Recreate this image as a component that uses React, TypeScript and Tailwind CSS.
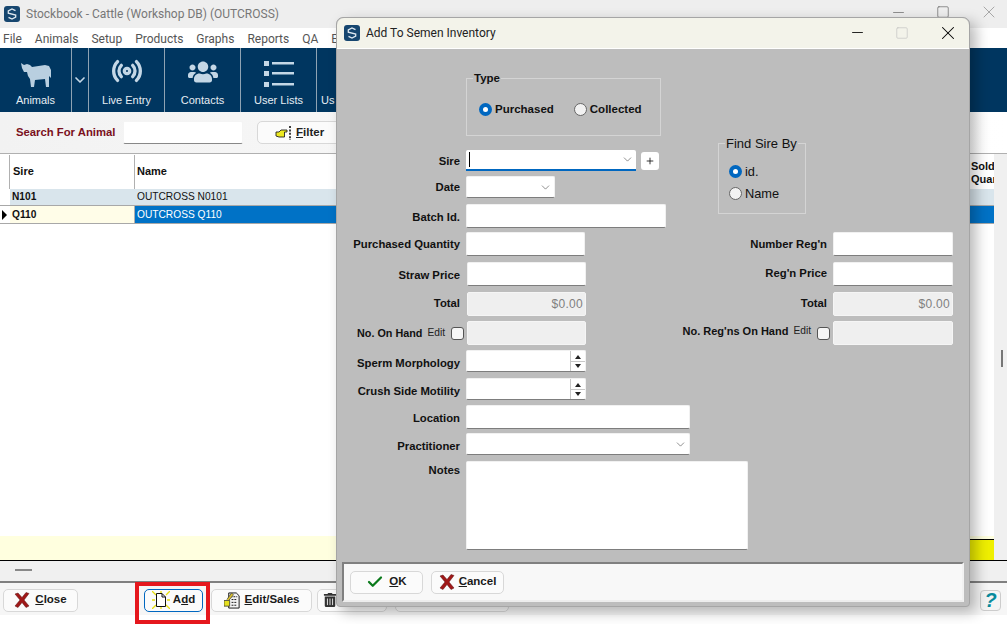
import { ReactNode } from "react";
import { ChevronDown, Radio, Check, Minus, Square, X, Plus } from "lucide-react";
import { FaUsers, FaTrashAlt } from "react-icons/fa";

const menus = ["File", "Animals", "Setup", "Products", "Graphs", "Reports", "QA", "E"];

function Logo({ size }: { size: string }) {
  return (
    <svg viewBox="0 0 16 16" className={size}>
      <rect width="16" height="16" rx="3" fill="#16466f" />
      <path d="M11.5 4.6 8 2.9 4.3 5 4.3 7.2 11.7 9 11.7 11 8 13.1 4.5 11.4" fill="none" stroke="#dfe9f1" strokeWidth="1.3" />
    </svg>
  );
}

function Cow() {
  return (
    <svg viewBox="0 0 30 25" className="h-[25px] w-[30px]" fill="#b9cfe0">
      <path d="M0 1 3 3 6 2 9 3 11 5 24 3 28 4 30 8 30 16 28 14 28 25 25 25 24 17 14 18 13 25 10 25 9 17 7 14 6 10 3 10 1 6Z" />
    </svg>
  );
}

function ListIcon() {
  return (
    <svg viewBox="0 0 30 26" className="h-[26px] w-[30px]" fill="#c4d7e6">
      <rect x="0" y="0" width="5" height="5" />
      <rect x="0" y="10" width="5" height="5" />
      <rect x="0" y="21" width="5" height="5" />
      <rect x="8" y="1" width="22" height="2.5" />
      <rect x="8" y="11" width="22" height="2.5" />
      <rect x="8" y="22" width="22" height="2.5" />
    </svg>
  );
}

function FilterHand() {
  return (
    <svg viewBox="0 0 16 14" className="h-[14px] w-[16px]">
      <path d="M1 6H4L6 4H12V6H9.5V11H4L1 10Z" fill="#ece820" stroke="#222" strokeWidth=".9" />
      <path d="M15 0V14" stroke="#111" strokeWidth="1.6" strokeDasharray="2 1.4" />
    </svg>
  );
}

function RedX({ size = "h-[16px] w-[16px]" }: { size?: string }) {
  return (
    <svg viewBox="0 0 16 16" className={size}>
      <path d="M1 2 4 1 8 5.5 12 0.5 15 1.5 10 8 15 14 12 15.5 8 10.5 4 15.5 1 14 6 8Z" fill="#a01818" stroke="#5a1010" strokeWidth=".5" />
    </svg>
  );
}

function AddIcon() {
  return (
    <svg viewBox="0 0 18 18" className="h-[18px] w-[18px]">
      <path d="M0 0 4 4M18 0 14 4M0 18 4 14M18 18 14 14M0 9H3M15 9H18M9 0V2M9 16V18" stroke="#e6de10" strokeWidth="1.3" />
      <path d="M4.5 2.5H10L13.5 6V15.5H4.5Z" fill="#fff" stroke="#111" strokeWidth="1" />
      <path d="M10 2.5V6H13.5" fill="none" stroke="#111" strokeWidth="1" />
    </svg>
  );
}

function EditIcon() {
  return (
    <svg viewBox="0 0 18 18" className="h-[17px] w-[17px]">
      <path d="M5 1H13L16 4V17H5Z" fill="#f4f4f4" stroke="#111" strokeWidth="1" />
      <path d="M7 5H14M8 8H14M8 11H14M8 14H14" stroke="#111" strokeWidth="1" strokeDasharray="2 1" />
      <path d="M0 9H6V15H0Z" fill="#e6e020" stroke="#333" strokeWidth=".8" />
      <path d="M3 8 8 1 10 3 5 9" fill="#d9c030" stroke="#333" strokeWidth=".7" />
    </svg>
  );
}

function FootButton({ className, children }: { className: string; children: ReactNode }) {
  return (
    <div className={`flex h-[23px] items-center rounded-[5px] border bg-[#fbfbfb] text-[11.5px] font-bold text-[#1a1a1a] ${className}`}>
      {children}
    </div>
  );
}

function ToolCell({ label, className, children }: { label: string; className: string; children: ReactNode }) {
  return (
    <div className={`flex h-full flex-col items-center border-r border-[#8fa3b3] ${className}`}>
      <div className="flex h-[40px] items-end justify-center pb-[1px] text-[#c4d7e6]">{children}</div>
      <div className="mt-[5px] text-[11px] leading-[14px] text-[#e6edf3]">{label}</div>
    </div>
  );
}

function Label({ className, children }: { className: string; children: ReactNode }) {
  return <div className={`shrink-0 pr-[6px] text-right text-[11.3px] font-bold text-[#111] ${className}`}>{children}</div>;
}

function TextBox({ className }: { className: string }) {
  return <div className={`shrink-0 rounded-[2px] border border-[#f1f1f1] border-b-[#7d7d7d] bg-white ${className}`} />;
}

function ReadOnly({ className, value }: { className: string; value?: string }) {
  return (
    <div className={`flex shrink-0 items-center justify-end rounded-[2px] border border-[#f5f5f5] bg-[#efefef] pr-[2px] text-[12px] tracking-[0.3px] text-[#808080] ${className}`}>
      {value}
    </div>
  );
}

function Combo({ className }: { className: string }) {
  return (
    <div className={`flex shrink-0 items-center justify-end rounded-[2px] border border-[#f1f1f1] border-b-[#7d7d7d] bg-white pr-[2px] ${className}`}>
      <ChevronDown size={13} strokeWidth={1} color="#333" />
    </div>
  );
}

function Spin() {
  return (
    <div className="flex h-[22px] w-[120px] justify-end rounded-[2px] border border-[#f1f1f1] border-b-[#7d7d7d] bg-white">
      <div className="flex w-[15px] flex-col items-center justify-center gap-[2px] border-l border-[#c8c8c8]">
        <div className="h-0 w-0 border-x-[3px] border-b-[4px] border-x-transparent border-b-[#222]" />
        <div className="h-px w-full bg-[#c8c8c8]" />
        <div className="h-0 w-0 border-x-[3px] border-t-[4px] border-x-transparent border-t-[#222]" />
      </div>
    </div>
  );
}

function RadioDot({ on, label, bold }: { on: boolean; label: string; bold?: boolean }) {
  return (
    <div className={`flex items-center gap-[3px] ${bold ? "text-[11.5px] font-bold" : "text-[12.8px]"} text-[#111]`}>
      {on ? (
        <div className="flex h-[13px] w-[13px] items-center justify-center rounded-full bg-[#0067c0]">
          <div className="h-[5px] w-[5px] rounded-full bg-white" />
        </div>
      ) : (
        <div className="h-[13px] w-[13px] rounded-full border border-[#666] bg-[#f2f2f2]" />
      )}
      {label}
    </div>
  );
}

function CheckBox() {
  return <div className="h-[13px] w-[13px] rounded-[3px] border border-[#555] bg-[#f6f6f6]" />;
}

export default function App() {
  return (
    <div className="relative h-[624px] w-[1007px] overflow-hidden bg-white font-['Liberation_Sans',sans-serif]">
      {/* main window */}
      <div className="flex h-full flex-col">
        <div className="flex h-[28px] items-center bg-[#eeeeee] pl-[4px] font-['Roboto',sans-serif] text-[12px] text-[#777]">
          <Logo size="h-[16px] w-[16px]" />
          <span className="ml-[6px]">Stockbook - Cattle (Workshop DB) (OUTCROSS)</span>
          <div className="ml-auto flex items-center pb-[4px] text-[#666]">
            <Minus size={17} strokeWidth={1} className="mr-[29px]" />
            <Square size={14} strokeWidth={1.2} className="mr-[29px]" />
            <X size={20} strokeWidth={1} color="#999" className="mr-[8px]" />
          </div>
        </div>
        <div className="flex h-[18px] items-center gap-[13px] bg-white pl-[3px] pt-[3px] font-['Roboto',sans-serif] text-[12px] text-[#555]">
          {menus.map((m) => (
            <span key={m}>{m}</span>
          ))}
        </div>
        <div className="mt-[2px] flex h-[64px] bg-[#003660]">
          <ToolCell label="Animals" className="w-[72px]">
            <Cow />
          </ToolCell>
          <div className="flex h-full w-[17px] items-center justify-center border-r border-[#8fa3b3] text-[#c4d7e6]">
            <ChevronDown size={16} strokeWidth={2.5} />
          </div>
          <ToolCell label="Live Entry" className="w-[76px]">
            <Radio size={32} strokeWidth={2.5} />
          </ToolCell>
          <ToolCell label="Contacts" className="w-[76px]">
            <FaUsers size={30} />
          </ToolCell>
          <ToolCell label="User Lists" className="w-[76px]">
            <ListIcon />
          </ToolCell>
          <div className="pl-[4px] pt-[45px] text-[11px] leading-[14px] text-[#e6edf3]">Us</div>
        </div>
        <div className="flex h-[41px] items-center bg-gradient-to-r from-[#f2f2f2] to-[#ffffff] pl-[16px]">
          <span className="w-[107px] text-[11.3px] font-bold text-[#7a1020]">Search For Animal</span>
          <div className="h-[23px] w-[120px] rounded-[2px] border border-[#f4f4f4] border-b-[#888] bg-white" />
          <FootButton className="ml-[14px] w-[90px] gap-[5px] border-[#d8d8d8] pl-[17px] text-[#222]">
            <FilterHand />
            <span><u>F</u>ilter</span>
          </FootButton>
        </div>
        <div className="h-px bg-[#b0b0b0]" />
        <div className="flex min-h-0 flex-1">
          <div className="flex min-w-0 flex-1 flex-col">
            <div className="mt-px flex h-[34px] bg-white pl-[9px] text-[11px] font-bold text-[#111]">
              <div className="flex w-[126px] items-center border-x border-[#b0b0b0] pb-[2px] pl-[3px]">Sire</div>
              <div className="flex flex-1 items-center pb-[2px] pl-[2px]">Name</div>
              <div className="w-[23px] overflow-hidden pt-[5px] leading-[13px]">
                Sold
                <br />
                Quan
              </div>
            </div>
            <div className="flex h-[17px] border-b border-[#a8a8a8] pl-[10px] text-[10.2px] leading-[16px] text-[#111]">
              <div className="w-[125px] bg-[#d9e5ec] pl-[2px] font-bold">N101</div>
              <div className="flex-1 bg-[#d9e5ec] pl-[2px]">OUTCROSS N0101</div>
            </div>
            <div className="relative flex h-[18px] border-b border-[#a8a8a8] pl-[10px] text-[10.2px] leading-[18px]">
              <div className="absolute left-[2px] top-[4px] h-0 w-0 border-y-[5px] border-l-[5px] border-y-transparent border-l-black" />
              <div className="w-[125px] border-r border-[#b0b0b0] bg-[#fffde8] pl-[2px] font-bold text-[#111]">Q110</div>
              <div className="flex-1 bg-[#0072c6] pl-[2px] text-white">OUTCROSS Q110</div>
            </div>
            <div className="flex-1 bg-white" />
            <div className="flex h-[24px] justify-end bg-[#ffffdf] pt-[3px]">
              <div className="h-[21px] w-[24px] border-t border-black bg-[#efef00]" />
            </div>
          </div>
          <div className="relative w-[13px] bg-[#f0f0f0]">
            <div className="absolute left-[7px] top-[196px] h-[17px] w-[2px] bg-[#777]" />
          </div>
        </div>
        <div className="flex h-[21px] items-center border-t border-black bg-[#f0f0f0] pl-[15px]">
          <div className="mb-[2px] h-[2px] w-[17px] bg-[#888]" />
        </div>
        <div className="h-[2px] bg-[#808080]" />
        <div className="flex h-[32px] items-center bg-[#f6f6f6] pl-[3px] pt-[2px]">
          <FootButton className="w-[75px] justify-center gap-[5px] border-[#d8d8d8]">
            <RedX />
            <span><u>C</u>lose</span>
          </FootButton>
          <FootButton className="ml-[66px] w-[59px] justify-center gap-[3px] border-[#0067c0]">
            <AddIcon />
            <span>A<u>d</u>d</span>
          </FootButton>
          <FootButton className="ml-[8px] w-[101px] justify-center gap-[4px] border-[#d8d8d8]">
            <EditIcon />
            <span><u>E</u>dit/Sales</span>
          </FootButton>
          <FootButton className="ml-[5px] w-[70px] border-[#d8d8d8] pl-[5px]">
            <FaTrashAlt size={14} color="#333" />
          </FootButton>
          <FootButton className="ml-[8px] w-[114px] border-[#d8d8d8]">
            <span />
          </FootButton>
          <div className="ml-auto mr-[6px] flex h-[21px] w-[21px] items-center justify-center rounded-[4px] border border-[#ccc] bg-[#f4f4f4] text-[20px] font-bold italic text-[#078a9c]">?</div>
        </div>
        <div className="h-[9px] bg-white" />
      </div>

      {/* red highlight around Add */}
      <div className="absolute left-[135px] top-[582px] h-[42px] w-[75px] border-[4px] border-[#e5171d]" />

      {/* dialog */}
      <div className="absolute left-[336px] top-[17px] flex h-[590px] w-[634px] flex-col rounded-t-[7px] rounded-b-[4px] border border-[#a5a5a5] bg-[#bdbdbd] shadow-[6px_5px_14px_rgba(0,0,0,0.28)]">
        <div className="flex h-[30px] items-center rounded-t-[7px] bg-[#f3f3ea] pb-[1px] pl-[7px] font-['Roboto',sans-serif] text-[12px] text-[#222]">
          <Logo size="h-[16px] w-[16px]" />
          <span className="ml-[6px]">Add To Semen Inventory</span>
          <div className="ml-auto flex items-center">
            <Minus size={17} strokeWidth={1.2} color="#000" className="mr-[29px]" />
            <Square size={14} strokeWidth={1} color="#bbb" className="mr-[28px]" />
            <X size={22} strokeWidth={1.1} color="#000" className="mr-[10px]" />
          </div>
        </div>
        <div className="h-px bg-white" />

        <div className="flex flex-1">
          {/* left column */}
          <div className="w-[343px] shrink-0 pt-[29px]">
            <div className="relative ml-[129px] flex h-[58px] w-[195px] items-center gap-[20px] border border-[#d4d4d4] pl-[12px] pt-[5px]">
              <div className="absolute -top-[7px] left-[6px] bg-[#bdbdbd] px-[1px] text-[11.5px] font-bold leading-[13px] text-[#111]">Type</div>
              <RadioDot on label="Purchased" bold />
              <RadioDot on={false} label="Collected" bold />
            </div>

            <div className="mt-[14px] flex h-[21px] items-center">
              <Label className="w-[129px] pt-[2px]">Sire</Label>
              <div className="flex h-full w-[170px] items-center justify-between rounded-t-[2px] border-b-2 border-[#0067c0] bg-white pl-[3px] pr-[2px]">
                <div className="h-[15px] w-px bg-black" />
                <ChevronDown size={13} strokeWidth={1} color="#333" />
              </div>
              <div className="ml-[5px] flex h-[18px] w-[18px] items-center justify-center rounded-[3px] bg-white">
                <Plus size={10} strokeWidth={2} color="#111" />
              </div>
            </div>
            <div className="mt-[5px] flex h-[22px] items-center">
              <Label className="w-[129px]">Date</Label>
              <Combo className="h-full w-[89px]" />
            </div>
            <div className="mt-[6px] flex h-[24px] items-center">
              <Label className="w-[129px] pt-[2px]">Batch Id.</Label>
              <TextBox className="h-full w-[200px]" />
            </div>
            <div className="mt-[4px] flex h-[24px] items-center">
              <Label className="w-[129px]">Purchased Quantity</Label>
              <TextBox className="h-full w-[119px]" />
            </div>
            <div className="mt-[6px] flex h-[24px] items-center">
              <Label className="w-[129px] pt-[2px]">Straw Price</Label>
              <TextBox className="ml-px h-full w-[119px]" />
            </div>
            <div className="mt-[6px] flex h-[24px] items-center">
              <Label className="w-[129px] pb-[2px]">Total</Label>
              <ReadOnly className="ml-px h-full w-[119px]" value="$0.00" />
            </div>
            <div className="mt-[5px] flex h-[24px] items-center">
              <div className="flex w-[130px] shrink-0 items-center justify-end">
                <span className="text-[10.8px] font-bold text-[#111]">No. On Hand</span>
                <span className="ml-[5px] text-[10.2px] text-[#222]">Edit</span>
                <div className="ml-[6px] mr-[3px]"><CheckBox /></div>
              </div>
              <ReadOnly className="h-full w-[119px]" />
            </div>
            <div className="mt-[5px] flex h-[22px] items-center">
              <Label className="w-[129px] pt-[4px]">Sperm Morphology</Label>
              <Spin />
            </div>
            <div className="mt-[6px] flex h-[22px] items-center">
              <Label className="w-[129px] pt-[4px]">Crush Side Motility</Label>
              <Spin />
            </div>
            <div className="mt-[5px] flex h-[24px] items-center">
              <Label className="w-[129px] pt-[2px]">Location</Label>
              <TextBox className="h-full w-[224px]" />
            </div>
            <div className="mt-[4px] flex h-[22px] items-center">
              <Label className="w-[129px] pt-[4px]">Practitioner</Label>
              <Combo className="h-full w-[224px]" />
            </div>
            <div className="mt-[6px] flex h-[89px] items-start">
              <Label className="w-[129px] pt-px">Notes</Label>
              <TextBox className="h-full w-[282px]" />
            </div>
          </div>

          {/* right column */}
          <div className="flex-1 pt-[94px]">
            <div className="relative ml-[38px] flex h-[71px] w-[88px] flex-col gap-[3px] border border-[#d4d4d4] pl-[10px] pt-[18px]">
              <div className="absolute -top-[7px] left-[6px] bg-[#bdbdbd] px-px text-[13px] leading-[14px] whitespace-nowrap text-[#111]">Find Sire By</div>
              <RadioDot on label="id." />
              <RadioDot on={false} label="Name" />
            </div>
            <div className="mt-[18px] flex h-[24px] items-center">
              <Label className="w-[153px]">Number Reg'n</Label>
              <TextBox className="h-full w-[120px]" />
            </div>
            <div className="mt-[6px] flex h-[24px] items-center">
              <Label className="w-[153px] pb-[2px]">Reg'n Price</Label>
              <TextBox className="h-full w-[120px]" />
            </div>
            <div className="mt-[6px] flex h-[24px] items-center">
              <Label className="w-[153px] pb-[2px]">Total</Label>
              <ReadOnly className="h-full w-[120px]" value="$0.00" />
            </div>
            <div className="mt-[5px] flex h-[24px] items-center">
              <div className="flex w-[153px] shrink-0 items-center justify-end">
                <span className="pb-[4px] text-[11px] font-bold text-[#111]">No. Reg'ns On Hand</span>
                <span className="ml-[5px] pb-[4px] text-[10.2px] text-[#222]">Edit</span>
                <div className="ml-[6px] mr-[3px]"><CheckBox /></div>
              </div>
              <ReadOnly className="h-full w-[120px]" />
            </div>
          </div>
        </div>

        <div className="mx-[5px] mb-[4px] flex h-[40px] items-center gap-[8px] border-2 border-[#808080] border-b-[#ededed] border-r-[#f2f2f2] bg-[#f8f8f8] pl-[6px]">
          <FootButton className="w-[73px] justify-center gap-[5px] border-[#d8d8d8]">
            <Check size={18} strokeWidth={3} color="#0b7a1c" />
            <span><u>O</u>K</span>
          </FootButton>
          <FootButton className="w-[73px] justify-center gap-[4px] border-[#d8d8d8]">
            <RedX />
            <span><u>C</u>ancel</span>
          </FootButton>
        </div>
      </div>
    </div>
  );
}
